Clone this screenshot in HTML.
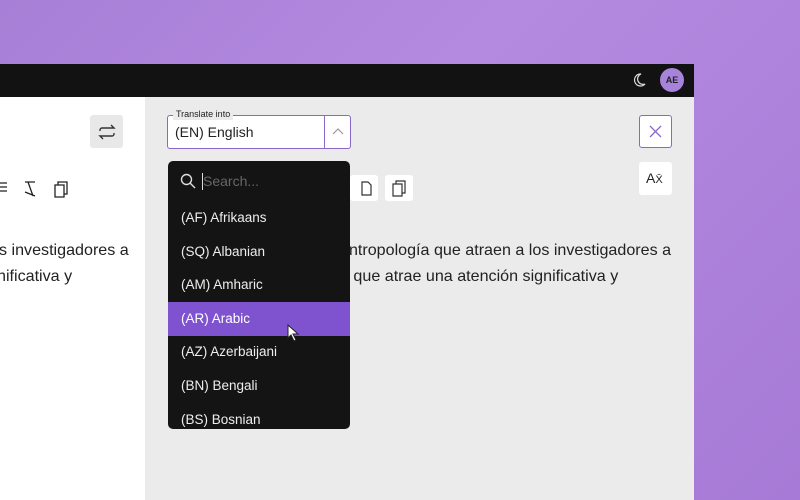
<!DOCTYPE html><html><head><style>
body{margin:0;width:800px;height:500px;overflow:hidden;background:linear-gradient(135deg,#a77fd6 0%,#b48ae0 40%,#a67ad6 100%);font-family:"Liberation Sans",sans-serif;position:relative}
.win{position:absolute;left:0;top:64px;width:694px;height:436px;background:#fff;overflow:hidden}
.bar{position:absolute;left:0;top:0;width:694px;height:33px;background:#121212}
.right{position:absolute;left:145px;top:33px;width:549px;height:403px;background:#ebebeb}
.av{position:absolute;left:660px;top:4px;width:24px;height:24px;border-radius:50%;background:#a883dc;color:#222;font-size:9px;font-weight:bold;text-align:center;line-height:24px}
.txt{position:absolute;font-size:16.1px;color:#222;white-space:nowrap}
.sel{position:absolute;left:167px;top:115px;width:182px;height:32px;border:1px solid #8a68c8;border-radius:3px;background:#fff}
.lab{position:absolute;left:173px;top:109px;font-size:9px;line-height:11px;background:#ebebeb;padding:0 3px;color:#222;z-index:5}
.dd{position:absolute;left:168px;top:161px;width:182px;height:268px;background:#141414;border-radius:5px;overflow:hidden}
.it{position:absolute;left:0;width:182px;height:34px;line-height:34px;color:#eee;font-size:13.5px;padding-left:13px;box-sizing:border-box}
.btn{position:absolute;background:#fff;border-radius:3px}
</style></head><body>
<div class="win">
<div class="bar"></div>
<svg style="position:absolute;left:631px;top:8px" width="16" height="16" viewBox="0 0 16 16"><path d="M10 2a6 6 0 1 0 4 10A5 5 0 0 1 10 2z" fill="none" stroke="#ddd" stroke-width="1.2"/></svg>
<div class="av">AE</div>
<div class="right"></div>
<div class="btn" style="left:90px;top:51px;width:33px;height:33px;background:#e8e8e8"></div>
<svg style="position:absolute;left:96px;top:57px" width="22" height="22" viewBox="0 0 22 22" fill="none" stroke="#333" stroke-width="1.4"><path d="M4 10V9a2 2 0 0 1 2-2h12l-3-3M18 12v1a2 2 0 0 1-2 2H4l3 3"/></svg>
<svg style="position:absolute;left:0;top:115px" width="75" height="20" viewBox="0 0 75 20" fill="none" stroke="#222" stroke-width="1.3"><path d="M0 4h7M0 8h7M0 12h7M25 3h10M28 3l5 14M25 13l10 4M55 6h9v12h-9zM58 6V3h9v12h-3"/></svg>
<div class="txt" style="left:-1px;top:177px">s investigadores a</div>
<div class="txt" style="left:-3px;top:203px">nificativa y</div>
<div class="txt" style="left:340px;top:177px">antropología que atraen a los investigadores a</div>
<div class="txt" style="left:340px;top:203px">o que atrae una atención significativa y</div>
<div class="btn" style="left:350px;top:111px;width:28px;height:26px"></div>
<div class="btn" style="left:385px;top:111px;width:28px;height:26px"></div>
<svg style="position:absolute;left:340px;top:114px" width="80" height="20" viewBox="0 0 80 20" fill="none" stroke="#333" stroke-width="1.2"><path d="M22 4h6l3 3v10h-9zM53 6h9v12h-9zM56 6V3h9v12h-3"/></svg>
<div class="btn" style="left:639px;top:51px;width:33px;height:33px;border:1px solid #8a68c8;background:#fff;box-sizing:border-box"></div>
<svg style="position:absolute;left:649px;top:61px" width="13" height="13" viewBox="0 0 13 13" stroke="#8a68c8" stroke-width="1.3"><path d="M1 1l11 11M12 1L1 12"/></svg>
<div class="btn" style="left:639px;top:98px;width:33px;height:33px"></div>
<div class="txt" style="left:646px;top:106px;font-size:14px">A<span style="font-size:11px">X̄</span></div>
</div>
<div class="sel"><div style="position:absolute;left:7px;top:8px;font-size:14px;color:#222">(EN) English</div><div style="position:absolute;left:156px;top:0;width:1px;height:32px;background:#8a68c8"></div><svg style="position:absolute;left:163px;top:9px" width="14" height="12" viewBox="0 0 14 12" fill="none" stroke="#999" stroke-width="1.2"><path d="M2 9l5-5 5 5"/></svg></div>
<div class="lab">Translate into</div>
<div class="dd">
<svg style="position:absolute;left:12px;top:12px" width="16" height="16" viewBox="0 0 16 16" fill="none" stroke="#ddd" stroke-width="1.4"><circle cx="6.5" cy="6.5" r="5"/><path d="M10 10l5 5"/></svg>
<div style="position:absolute;left:34px;top:12px;width:1px;height:17px;background:#ddd"></div>
<div style="position:absolute;left:35px;top:12px;font-size:14px;color:#666">Search...</div>
<div class="it" style="top:40px">(AF) Afrikaans</div>
<div class="it" style="top:74px">(SQ) Albanian</div>
<div class="it" style="top:107px">(AM) Amharic</div>
<div class="it" style="top:141px;background:#7f52cf;color:#fff">(AR) Arabic</div>
<div class="it" style="top:174px">(AZ) Azerbaijani</div>
<div class="it" style="top:208px">(BN) Bengali</div>
<div class="it" style="top:242px">(BS) Bosnian</div>
<svg style="position:absolute;left:119px;top:163px" width="14" height="18" viewBox="0 0 14 18"><path d="M1 1v13l3-3 3 6 2-1-3-6h5z" fill="#fff" stroke="#222" stroke-width="1"/></svg>
</div>
</body></html>
